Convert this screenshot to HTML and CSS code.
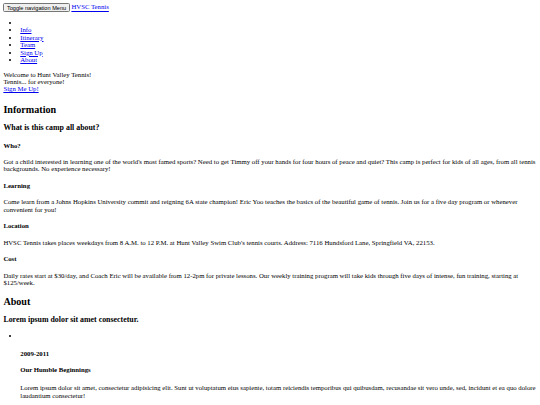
FILE: index.html
```html
<!DOCTYPE html>
<html lang="en" class="page">
<head>
<meta charset="utf-8">
<title>HVSC Tennis</title>
<link rel="stylesheet" href="styles.css">
</head>
<body class="page-body">
<nav class="navbar">
  <div class="navbar-header">
    <button type="button" class="navbar-toggle">Toggle navigation Menu</button>
    <a class="navbar-brand" href="#page-top">HVSC Tennis</a>
  </div>
  <div class="navbar-collapse">
    <ul class="navbar-nav">
      <li class="hidden"><a href="#page-top"></a></li>
      <li><a href="#info">Info</a></li>
      <li><a href="#itinerary">Itinerary</a></li>
      <li><a href="#team">Team</a></li>
      <li><a href="#signup">Sign Up</a></li>
      <li><a href="#about">About</a></li>
    </ul>
  </div>
</nav>
<header class="masthead">
  <div class="intro-lead-in">Welcome to Hunt Valley Tennis!</div>
  <div class="intro-heading">Tennis... for everyone!</div>
  <a href="#signup" class="intro-btn">Sign Me Up!</a>
</header>
<section id="info" class="section">
  <h2 class="section-heading">Information</h2>
  <h3 class="section-subheading">What is this camp all about?</h3>
  <h4 class="service-heading">Who?</h4>
  <p class="text-muted">Got a child interested in learning one of the world's most famed sports? Need to get Timmy off your hands for four hours of peace and quiet? This camp is perfect for kids of all ages, from all tennis backgrounds. No experience necessary!</p>
  <h4 class="service-heading">Learning</h4>
  <p class="text-muted">Come learn from a Johns Hopkins University commit and reigning 6A state champion! Eric Yoo teaches the basics of the beautiful game of tennis. Join us for a five day program or whenever convenient for you!</p>
  <h4 class="service-heading">Location</h4>
  <p class="text-muted">HVSC Tennis takes places weekdays from 8 A.M. to 12 P.M. at Hunt Valley Swim Club's tennis courts. Address: 7116 Hundsford Lane, Springfield VA, 22153.</p>
  <h4 class="service-heading">Cost</h4>
  <p class="text-muted">Daily rates start at $30/day, and Coach Eric will be available from 12-2pm for private lessons. Our weekly training program will take kids through five days of intense, fun training, starting at $125/week.</p>
</section>
<section id="about" class="section section-about">
  <h2 class="section-heading">About</h2>
  <h3 class="section-subheading">Lorem ipsum dolor sit amet consectetur.</h3>
  <ul class="timeline">
    <li class="timeline-item">
      <div class="timeline-image"><span class="timeline-img"></span></div>
      <div class="timeline-panel">
        <div class="timeline-heading">
          <h4 class="timeline-year">2009-2011</h4>
          <h4 class="subheading">Our Humble Beginnings</h4>
        </div>
        <div class="timeline-body">
          <p class="timeline-text">Lorem ipsum dolor sit amet, consectetur adipisicing elit. Sunt ut voluptatum eius sapiente, totam reiciendis temporibus qui quibusdam, recusandae sit vero unde, sed, incidunt et ea quo dolore laudantium consectetur!</p>
        </div>
      </div>
    </li>
  </ul>
</section>
</body>
</html>
```
FILE: styles.css
```css
.page {
  zoom: 0.421875;
  font-family: "Liberation Serif", "Times New Roman", serif;
  line-height: 1.107;
}
.masthead {
  padding-bottom: 7px;
}
.section-about {
  margin-top: 22.5px;
}
.timeline-img {
  display: inline-block;
  width: 0;
  height: 0;
}
.timeline-year {
  padding-top: 2px;
}
.timeline-text {
  margin-top: 26px;
}
```
